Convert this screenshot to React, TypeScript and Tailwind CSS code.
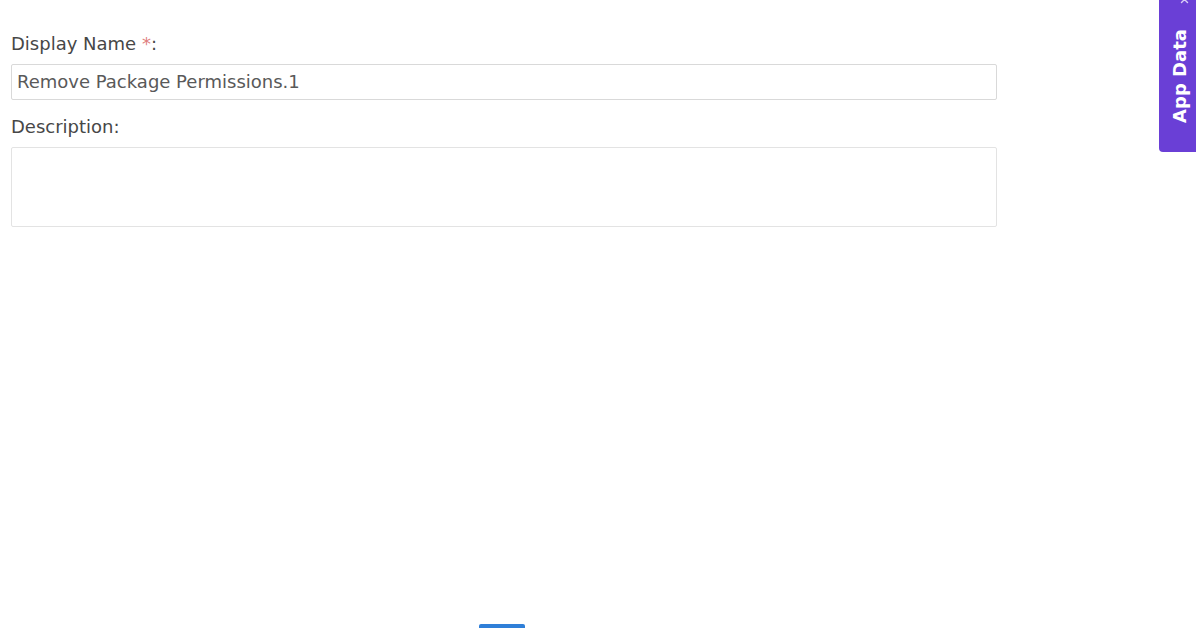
import React from "react";

export default function App() {
  return (
    <div className="relative w-[1196px] h-[628px] bg-white overflow-hidden" style={{ fontFamily: "'DejaVu Sans', 'Open Sans', sans-serif" }}>
      <div className="pt-[33px] pl-[11px] w-[997px] flex flex-col">
        <label className="text-[18px] leading-[22px] text-[#474747]">
          Display Name <span className="text-[#e08080]">*</span>:
        </label>
        <div className="mt-[9px] h-[36px] border border-[#d9d9d9] rounded-[2px] flex items-center px-[5px] text-[18px] leading-[22px] text-[#595959]">
          Remove Package Permissions.1
        </div>
        <label className="mt-[16px] text-[18px] leading-[22px] text-[#474747]">Description:</label>
        <div className="mt-[9px] h-[80px] border border-[#e3e3e3] rounded-[2px]"></div>
      </div>

      <div className="absolute top-0 right-0 w-[37px] h-[152px] bg-[#6a3fd6] rounded-bl-[4px] flex items-center justify-center">
        <svg className="absolute top-[-5px] left-[21px]" width="9" height="9" viewBox="0 0 9 9">
          <path d="M1.5 1.5 L7.5 7.5 M7.5 1.5 L1.5 7.5" stroke="rgba(255,255,255,0.75)" strokeWidth="1.4" strokeLinecap="round" />
        </svg>
        <span className="ml-[5px] text-white font-bold text-[18px] leading-[22px] whitespace-nowrap -rotate-90 block">App Data</span>
      </div>

      <div className="absolute bottom-0 left-[479px] w-[46px] h-[4px] bg-[#2f7fd8] rounded-t-[2px]"></div>
    </div>
  );
}
